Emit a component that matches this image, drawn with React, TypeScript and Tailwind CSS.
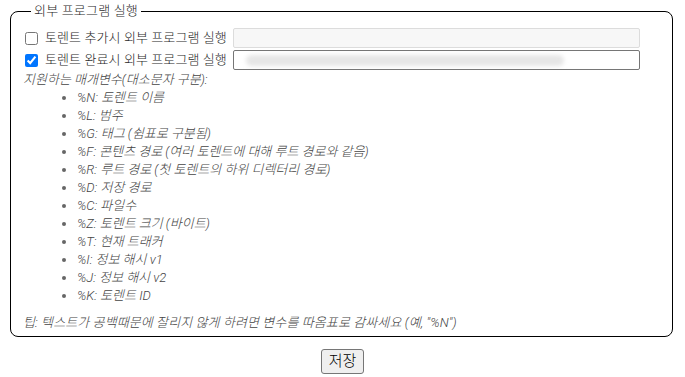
import React from "react";

const items: string[] = [
  "%N: 토렌트 이름",
  "%L: 범주",
  "%G: 태그 (쉼표로 구분됨)",
  "%F: 콘텐츠 경로 (여러 토렌트에 대해 루트 경로와 같음)",
  "%R: 루트 경로 (첫 토렌트의 하위 디렉터리 경로)",
  "%D: 저장 경로",
  "%C: 파일수",
  "%Z: 토렌트 크기 (바이트)",
  "%T: 현재 트래커",
  "%I: 정보 해시 v1",
  "%J: 정보 해시 v2",
  "%K: 토렌트 ID",
];

export default function App() {
  return (
    <div
      className="w-[685px] h-[377px] bg-white text-[13px] text-[#1e1e1e] font-light"
      style={{ fontFamily: 'Roboto, "Noto Sans CJK KR", sans-serif' }}
    >
      <fieldset className="ml-[10px] mr-[12px] mt-[2px] border border-black rounded-[8px] pl-[12px] pr-[12px] pt-[8px] pb-[4px]">
        <legend className="ml-[8px] px-[3px] leading-[18px] tracking-[0.2px]">외부 프로그램 실행</legend>
        <div className="flex items-center h-[20px]">
          <input type="checkbox" className="ml-[2px] w-[13px] h-[13px] accent-[#0075ff]" />
          <span className="ml-[7px] w-[188px] leading-[18px] tracking-[0.1px]">토렌트 추가시 외부 프로그램 실행</span>
          <input
            type="text"
            disabled
            className="w-[407px] h-[20px] bg-[#f7f7f7] border border-[#dcdcdc] rounded-[2px]"
          />
        </div>
        <div className="flex items-center h-[20px] mt-[2px]">
          <input type="checkbox" defaultChecked className="ml-[2px] w-[13px] h-[13px] accent-[#0075ff]" />
          <span className="ml-[7px] w-[188px] leading-[18px] tracking-[0.1px]">토렌트 완료시 외부 프로그램 실행</span>
          <div className="relative w-[407px] h-[20px] bg-white border border-[#767676] rounded-[2px] overflow-hidden">
            <div className="absolute left-[12px] top-[4px] w-[318px] h-[11px] rounded-full bg-[#e6e6e6] blur-[2px]" />
          </div>
        </div>
        <p className="mt-[1px] italic leading-[18px] text-[#444]">지원하는 매개변수(대소문자 구분):</p>
        <ul className="list-disc pl-[54px] italic leading-[18px] text-[#444] marker:text-[#666]">
          {items.map((t) => (
            <li key={t}>{t}</li>
          ))}
        </ul>
        <p className="mt-[9px] italic leading-[18px] text-[#444] tracking-[0.1px]">
          팁: 텍스트가 공백때문에 잘리지 않게 하려면 변수를 따옴표로 감싸세요 (예, "%N")
        </p>
      </fieldset>
      <div className="flex justify-center mt-[12px]">
        <button className="w-[43px] h-[25px] bg-[#efefef] border border-[#767676] rounded-[3px] text-[15px] text-black font-light leading-none">
          저장
        </button>
      </div>
    </div>
  );
}
